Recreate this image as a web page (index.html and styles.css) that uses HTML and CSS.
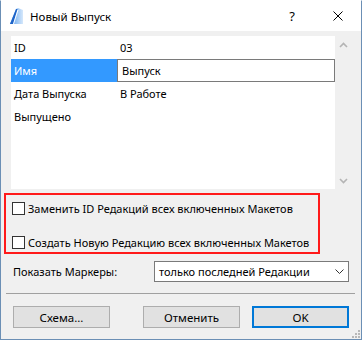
FILE: index.html
```html
<!DOCTYPE html>
<html>
<head>
  <title>Новый Выпуск</title>
  <link rel="stylesheet" href="styles.css">
</head>
<body>
  <div class="window">
    <div class="titlebar">
      <svg class="app-icon" width="14" height="16" viewBox="0 0 14 16">
        <defs>
          <linearGradient id="ig" x1="0" y1="0" x2="1" y2="0">
            <stop offset="0" stop-color="#5aa0ee"/>
            <stop offset="1" stop-color="#d6e8fb"/>
          </linearGradient>
        </defs>
        <polygon points="0,16 6,1 8,0 13,2 13,16" fill="url(#ig)"/>
        <polygon points="0,16 6,1 7.5,1 3,16" fill="#1f64c8"/>
        <line x1="3.5" y1="16" x2="8" y2="2" stroke="#ffffff" stroke-width="1"/>
      </svg>
      <span class="title">Новый Выпуск</span>
      <span class="help">?</span>
      <svg class="close" width="10" height="10" viewBox="0 0 10 10">
        <path d="M0.5 0.5 L9.5 9.5 M9.5 0.5 L0.5 9.5" stroke="#000" stroke-width="1"/>
      </svg>
    </div>

    <div class="content">
      <div class="list">
        <div class="rows">
          <div class="row">
            <div class="cell-label">ID</div>
            <div class="cell-value">03</div>
          </div>
          <div class="row selected">
            <div class="cell-label">Имя</div>
            <div class="cell-value editing">Выпуск</div>
          </div>
          <div class="row">
            <div class="cell-label">Дата Выпуска</div>
            <div class="cell-value">В Работе</div>
          </div>
          <div class="row">
            <div class="cell-label">Выпущено</div>
            <div class="cell-value"></div>
          </div>
        </div>
        <div class="scrollbar">
          <svg width="9" height="6" viewBox="0 0 9 6"><path d="M1 5 L4.5 1.5 L8 5" fill="none" stroke="#b4b4b4" stroke-width="1.6"/></svg>
          <svg width="9" height="6" viewBox="0 0 9 6"><path d="M1 1 L4.5 4.5 L8 1" fill="none" stroke="#b4b4b4" stroke-width="1.6"/></svg>
        </div>
      </div>

      <div class="highlight">
        <label class="check-row"><span class="checkbox"></span>Заменить ID Редакций всех включенных Макетов</label>
        <label class="check-row"><span class="checkbox"></span>Создать Новую Редакцию всех включенных Макетов</label>
      </div>

      <div class="markers">
        <span class="markers-label">Показать Маркеры:</span>
        <div class="select">
          <span>только последней Редакции</span>
          <svg width="9" height="5" viewBox="0 0 9 5"><path d="M0.5 0.5 L4.5 4.5 L8.5 0.5" fill="none" stroke="#333" stroke-width="1"/></svg>
        </div>
      </div>

      <div class="separator"></div>

      <div class="buttons">
        <button class="btn">Схема...</button>
        <button class="btn">Отменить</button>
        <button class="btn default">OK</button>
      </div>

      <svg class="grip" width="8" height="8" viewBox="0 0 8 8">
        <rect x="6" y="0" width="2" height="2" fill="#b8b8b8"/>
        <rect x="3" y="3" width="2" height="2" fill="#b8b8b8"/>
        <rect x="6" y="3" width="2" height="2" fill="#b8b8b8"/>
        <rect x="0" y="6" width="2" height="2" fill="#b8b8b8"/>
        <rect x="3" y="6" width="2" height="2" fill="#b8b8b8"/>
        <rect x="6" y="6" width="2" height="2" fill="#b8b8b8"/>
      </svg>
    </div>
  </div>
</body>
</html>
```

FILE: styles.css
```css
/* Dialog window */
body {
  margin: 0;
  font-family: "Noto Sans", "DejaVu Sans", sans-serif;
  font-size: 11px;
  color: #000;
}

.window {
  width: 362px;
  height: 340px;
  box-sizing: border-box;
  border: 1px solid #6b8fb5;
  border-top-color: #ffffff;
  display: flex;
  flex-direction: column;
  background: #f0f0f0;
}

/* Title bar */
.titlebar {
  height: 30px;
  background: #fff;
  display: flex;
  align-items: center;
  font-size: 11.5px;
}

.app-icon {
  margin-left: 9px;
  margin-top: -1px;
}

.title {
  margin-left: 6px;
  flex: 1;
}

.help {
  margin-right: 38px;
  font-size: 13px;
}

.close {
  margin-right: 18px;
}

/* Body of the dialog */
.content {
  flex: 1;
  position: relative;
  display: flex;
  flex-direction: column;
}

.list {
  margin: 5px 0 0 10px;
  width: 341px;
  height: 153px;
  display: flex;
}

.rows {
  flex: 1;
  background: #fff;
}

.row {
  display: flex;
  height: 23px;
  align-items: center;
}

.cell-label {
  width: 103px;
  padding-left: 3px;
  height: 100%;
  display: flex;
  align-items: center;
}

.cell-value {
  flex: 1;
  padding-left: 3px;
}

.row.selected .cell-label {
  background: #3399ff;
  color: #fff;
}

.cell-value.editing {
  height: 100%;
  box-sizing: border-box;
  border: 1px solid #7a7a7a;
  padding-left: 4px;
  display: flex;
  align-items: center;
}

.scrollbar {
  width: 17px;
  display: flex;
  flex-direction: column;
  justify-content: space-between;
  align-items: center;
  padding: 6px 0 5px;
}

/* Red annotation frame around the checkboxes */
.highlight {
  margin: 4px 0 0 3px;
  width: 316px;
  height: 61px;
  box-sizing: border-box;
  border: 2px solid #ff1a1a;
  padding: 5px 0 0 6px;
  display: flex;
  flex-direction: column;
  gap: 17px;
}

.check-row {
  display: flex;
  align-items: center;
  height: 17px;
}

.checkbox {
  width: 13px;
  height: 13px;
  box-sizing: border-box;
  border: 1px solid #333;
  background: #fff;
  margin-right: 3px;
}

.markers {
  display: flex;
  align-items: center;
  margin: 7px 0 0 12px;
}

.markers-label {
  width: 141px;
}

.select {
  width: 195px;
  height: 21px;
  box-sizing: border-box;
  border: 1px solid #7a7a7a;
  background: #fff;
  display: flex;
  align-items: center;
  justify-content: space-between;
  padding: 0 4px 0 4px;
}

.separator {
  margin: 11px 0 0 5px;
  width: 349px;
  height: 1px;
  background: #a0a0a0;
}

.buttons {
  display: flex;
  margin: 12px 0 0 12px;
}

.btn {
  width: 97px;
  height: 22px;
  border: 1px solid #adadad;
  background: #e1e1e1;
  font-family: inherit;
  font-size: 11.5px;
  color: #000;
  padding: 0;
  margin-right: 33px;
}

.btn.default {
  margin-left: -21px;
  border: 2px solid #0078d7;
  margin-right: 0;
}

.grip {
  position: absolute;
  right: 1px;
  bottom: 1px;
}
```
